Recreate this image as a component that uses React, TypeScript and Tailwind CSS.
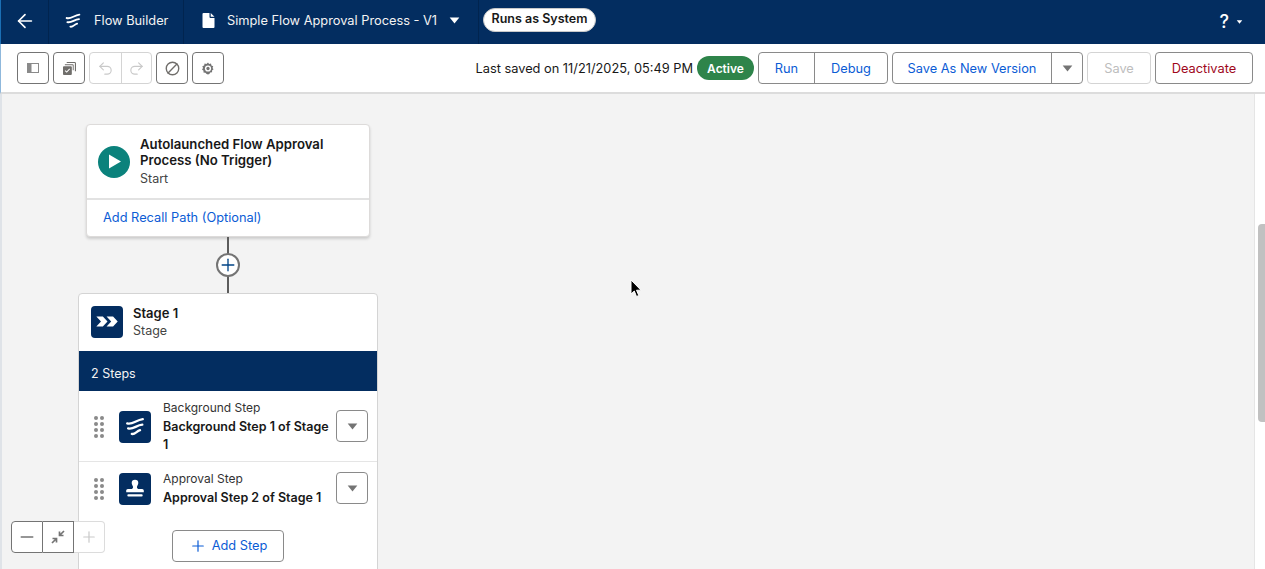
import { Plus, Minus, ArrowLeft, Undo2, Redo2, Ban } from "lucide-react";

const FlowIcon = ({ className }: { className: string }) => (
  <svg viewBox="0 0 24 24" className={className} fill="none" stroke="#fff" strokeLinecap="round" strokeWidth="2.500">
    <path d="M3.500 8C9 10 13 4.500 20.500 3.500" />
    <path d="M4.500 13.500C10 15 13.500 10 20 9.500" />
    <path d="M8.500 19.500C12 20.500 13.500 16.500 17.500 15.500" />
  </svg>
);

const Caret = ({ className }: { className: string }) => (
  <svg viewBox="0 0 12 8" className={className}>
    <path d="M0.500 0.500h11L6 7.500z" fill="currentColor" />
  </svg>
);

const IconBtn = ({ children }: { children: React.ReactNode }) => (
  <button className="w-8 h-8 flex items-center justify-center bg-white border border-[#747474] rounded text-[#706e6b]">
    {children}
  </button>
);

const Dots = () => (
  <div className="grid grid-cols-2 gap-x-[2px] gap-y-[2px] w-[10px] shrink-0">
    {[0, 1, 2, 3, 4, 5, 6, 7].map((i) => (
      <span key={i} className="w-1 h-1 rounded-full bg-[#8a8a8a]" />
    ))}
  </div>
);

const MenuBtn = () => (
  <button className="w-8 h-8 shrink-0 flex items-center justify-center bg-white border border-[#8a8a8a] rounded text-[#747474]">
    <Caret className="w-[11px] h-[7px]" />
  </button>
);

const TopBar = () => (
  <div className="h-11 bg-[#032d60] flex items-center text-white text-[12.800px] border-l border-[#1b6fb5]">
    <div className="w-[48px] h-full flex items-center justify-center border-r border-[#01244f]">
      <ArrowLeft size={22} strokeWidth={1.800} className="-mt-[3px]" />
    </div>
    <div className="w-[135px] h-full flex items-center border-r border-[#01244f] pl-[15px] gap-[12px] pb-[3px]">
      <FlowIcon className="w-[18px] h-[18px]" />
      <span className="text-[#f3f3f3]">Flow Builder</span>
    </div>
    <div className="w-[295px] h-full flex items-center border-r border-[#01244f] pl-[18px] pb-[3px]">
      <svg viewBox="0 0 12 15" className="w-[13px] h-[15px]">
        <path d="M1 0h6v4a1 1 0 0 0 1 1h4v9a1 1 0 0 1-1 1H1a1 1 0 0 1-1-1V1a1 1 0 0 1 1-1z M8.200 0 12 3.800H8.200z" fill="#fff" />
      </svg>
      <span className="ml-[12px] text-[#f3f3f3] whitespace-nowrap">Simple Flow Approval Process - V1</span>
      <Caret className="w-[11px] h-[7px] ml-[12px] text-white" />
    </div>
    <div className="ml-[4px] -mt-[5px] h-6 w-[113px] flex items-center justify-center bg-white border border-[#c9c9c9] rounded-full text-[#181818] text-[12.500px] font-semibold whitespace-nowrap">
      Runs as System
    </div>
    <div className="ml-auto mr-[22px] flex items-center gap-[7px]">
      <span className="text-[18px] font-medium leading-none">?</span>
      <Caret className="w-[7px] h-[4px] text-white" />
    </div>
  </div>
);

const ToolBar = () => (
  <div className="h-[50px] bg-white border-b-2 border-l border-b-[#dcdcdc] border-l-[#8fb8dc] flex items-center pl-[16px] pr-[12px] text-[12.800px]">
    <div className="flex items-center gap-[4px]">
      <IconBtn>
        <svg viewBox="0 0 12 10" className="w-3 h-[10px]">
          <path d="M0 0h12v10H0z M4.500 1v8H11V1z" fill="#8a8a8a" fillRule="evenodd" />
        </svg>
      </IconBtn>
      <IconBtn>
        <svg viewBox="0 0 14 14" className="w-[13px] h-[13px]">
          <path d="M4 0h8.500A1.500 1.500 0 0 1 14 1.500V10h-1.200V1.200H4z M2 2.500h8.500a1 1 0 0 1 1 1V9h-1V3.500H2z" fill="#706e6b" />
          <rect x="0" y="4.500" width="9.500" height="9.500" rx="1" fill="#706e6b" />
          <path d="M2.300 9.200l1.700 1.700 3.200-3.400" fill="none" stroke="#fff" strokeWidth="1.100" />
        </svg>
      </IconBtn>
      <div className="flex h-8 border border-[#d4d4d4] rounded text-[#c9c9c9]">
        <div className="w-8 flex items-center justify-center border-r border-[#d4d4d4]">
          <Undo2 size={17} strokeWidth={1.600} />
        </div>
        <div className="w-[29px] flex items-center justify-center">
          <Redo2 size={17} strokeWidth={1.600} />
        </div>
      </div>
      <IconBtn>
        <Ban size={15} strokeWidth={2.200} className="-scale-x-100" />
      </IconBtn>
      <IconBtn>
        <svg viewBox="0 0 14 14" className="w-3 h-[13px]">
          <path
            d="M7 0l1.300 1.700 2.200-.4.500 2.200 2.100.8-.8 2 1.200 1.700-1.800 1.300.1 2.200-2.200.1L8.600 13.500 7 14l-1.600-.5-1.500-1.600-2.200-.1.100-2.200L0 8.300 1.200 6.300l-.8-2 2.100-.8.500-2.200 2.200.4z"
            fill="#747474"
          />
          <circle cx="7" cy="7" r="3.600" fill="#fff" />
          <circle cx="7" cy="7" r="1.900" fill="#747474" />
        </svg>
      </IconBtn>
    </div>
    <div className="ml-auto flex items-center">
      <span className="text-[#181818] whitespace-nowrap pt-[2px]">Last saved on 11/21/2025, 05:49 PM</span>
      <span className="ml-[4px] h-6 w-[57px] flex items-center justify-center bg-[#2e844a] rounded-full text-white font-semibold text-[12px] pt-[2px]">
        Active
      </span>
      <div className="ml-[4px] flex h-8 bg-white border border-[#8a8a8a] rounded text-[#0b5cd5]">
        <button className="w-[56px] border-r border-[#8a8a8a] pt-[2px]">Run</button>
        <button className="w-[72px] pt-[2px]">Debug</button>
      </div>
      <div className="ml-[4px] flex h-8 bg-white border border-[#8a8a8a] rounded text-[#0b5cd5]">
        <button className="w-[159px] border-r border-[#8a8a8a] whitespace-nowrap pt-[2px]">Save As New Version</button>
        <button className="w-[30px] flex items-center justify-center text-[#747474]">
          <Caret className="w-[11px] h-[7px]" />
        </button>
      </div>
      <button className="ml-[4px] w-[64px] h-8 bg-white border border-[#d4d4d4] rounded text-[#bdbdbd] pt-[2px]">Save</button>
      <button className="ml-[4px] w-[98px] h-8 bg-white border border-[#8a8a8a] rounded text-[#a0071b] pt-[2px]">Deactivate</button>
    </div>
  </div>
);

const StartCard = () => (
  <div className="ml-[8px] w-[284px] bg-white border border-[#dddbda] rounded shadow-[0_2px_3px_rgba(0,0,0,0.16)]">
    <div className="h-[75px] flex items-center pl-[11px] border-b-2 border-[#e2e2e2]">
      <div className="w-8 h-8 rounded-full bg-[#0b827c] flex items-center justify-center shrink-0">
        <svg viewBox="0 0 12 14" className="w-[12px] h-[15px] ml-[2px]">
          <path d="M0 0l12 7-12 7z" fill="#fff" />
        </svg>
      </div>
      <div className="ml-[10px] pt-[2px] text-[13.200px] leading-4 text-[#181818]">
        <div className="font-semibold w-[215px]">Autolaunched Flow Approval Process (No Trigger)</div>
        <div className="text-[#444] text-[12.500px] leading-[22px] font-normal">Start</div>
      </div>
    </div>
    <div className="h-[36px] flex items-center pl-[16px] text-[12.800px] text-[#0b5cd5]">Add Recall Path (Optional)</div>
  </div>
);

const Connector = () => (
  <div className="ml-[149px] w-[2px] h-[56px] bg-[#5c5c5c] relative">
    <div className="absolute left-[-11px] top-[16px] w-6 h-6 rounded-full bg-white border-2 border-[#747474] flex items-center justify-center">
      <Plus size={20} strokeWidth={1.600} className="text-[#014486] shrink-0" />
    </div>
  </div>
);

type StepProps = {
  kind: string;
  title: string;
  icon: React.ReactNode;
  h: string;
  dotsTop: string;
  iconTop: string;
  menuTop: string;
};

const Step = ({ kind, title, icon, h, dotsTop, iconTop, menuTop }: StepProps) => (
  <div className={`${h} flex items-start pl-[15px] pr-[9px] text-[#181818]`}>
    <div className={dotsTop}><Dots /></div>
    <div className={`${iconTop} ml-[15px] w-8 h-8 shrink-0 rounded bg-[#032d60] flex items-center justify-center`}>{icon}</div>
    <div className="ml-[12px] w-[170px] mt-[7px] text-[12.500px] leading-[18px]">
      <div className="text-[#333] text-[12px] leading-[20px]">{kind}</div>
      <div className="font-semibold">{title}</div>
    </div>
    <div className={`${menuTop} ml-auto`}><MenuBtn /></div>
  </div>
);

const StageCard = () => (
  <div className="w-[300px] bg-white border border-[#d4d4d4] rounded-t shrink-0">
    <div className="h-[57px] flex items-center pl-[12px] pb-[2px]">
      <div className="w-8 h-8 rounded bg-[#032d60] flex items-center justify-center">
        <svg viewBox="0 0 24 14" className="w-[23px] h-[13px]">
          <path d="M0 1.500h7l5 5.500-5 5.500H0l5-5.500z M11 1.500h7l5 5.500-5 5.500h-7l5-5.500z" fill="#fff" />
        </svg>
      </div>
      <div className="ml-[10px] text-[13px] leading-[18px]">
        <div className="font-semibold text-[#181818]">Stage 1</div>
        <div className="text-[#444] text-[12.500px]">Stage</div>
      </div>
    </div>
    <div className="h-[40px] bg-[#032d60] text-[#f3f3f3] text-[12.500px] flex items-center pl-[12px] pt-[6px]">2 Steps</div>
    <Step
      kind="Background Step"
      title="Background Step 1 of Stage 1"
      h="h-[71px] border-b border-[#e5e5e5]"
      dotsTop="mt-[25px]"
      iconTop="mt-[20px]"
      menuTop="mt-[19px]"
      icon={<FlowIcon className="w-[22px] h-[22px]" />}
    />
    <Step
      kind="Approval Step"
      title="Approval Step 2 of Stage 1"
      h="h-[59px]"
      dotsTop="mt-[16px]"
      iconTop="mt-[11px]"
      menuTop="mt-[10px]"
      icon={
        <svg viewBox="0 0 20 20" className="w-[22px] h-[22px]">
          <path d="M7 4.500a3 3 0 0 1 6 0c0 1.500-1 2.200-1.200 3.500-.1.800.2 1.500 1 2h3.700c.8 0 1.500.7 1.500 1.500V13H2v-1.500C2 10.700 2.700 10 3.500 10h3.700c.8-.5 1.100-1.200 1-2C8 6.700 7 6 7 4.500z" fill="#fff" />
          <rect x="3" y="14.800" width="14" height="2" rx="1" fill="#fff" />
        </svg>
      }
    />
    <div className="flex justify-center mt-[9px] pb-[20px]">
      <button className="w-[112px] h-8 bg-white border border-[#8a8a8a] rounded flex items-center justify-center gap-[5px] text-[12.800px] text-[#0b5cd5]">
        <Plus size={18} strokeWidth={1.600} />
        Add Step
      </button>
    </div>
  </div>
);

const ZoomControls = () => (
  <div className="absolute left-[9px] bottom-[16px] flex h-8 bg-white rounded">
    <div className="w-8 flex items-center justify-center border border-[#747474] rounded-l text-[#747474]">
      <Minus size={20} strokeWidth={1.600} />
    </div>
    <div className="w-[31px] flex items-center justify-center border-y border-r border-[#747474]">
      <svg viewBox="0 0 14 14" className="w-[14px] h-[14px]">
        <path d="M13 1L9 5M8.500 1.500v4h4M1 13l4-4M1.500 8.500h4v4" fill="none" stroke="#747474" strokeWidth="1.700" />
      </svg>
    </div>
    <div className="w-[31px] flex items-center justify-center border-y border-r border-[#dcdcdc] rounded-r text-[#c9c9c9]">
      <Plus size={18} strokeWidth={1.600} />
    </div>
  </div>
);

export default function App() {
  return (
    <div className="w-[1265px] h-[569px] overflow-hidden flex flex-col bg-white font-['Inter','Liberation_Sans',sans-serif]">
      <TopBar />
      <ToolBar />
      <div className="relative flex flex-1 min-h-0 border-l-2 border-[#dfe3e8]">
        <div className="flex-1 bg-[#f3f3f3] border-r border-[#e5e5e5] overflow-hidden pt-[30px] pl-[76px]">
          <StartCard />
          <Connector />
          <StageCard />
        </div>
        <div className="w-[10px] pl-[3px] pt-[130px] bg-white">
          <div className="w-[7px] h-[198px] bg-[#c1c1c1] rounded-l" />
        </div>
        <ZoomControls />
        <svg viewBox="0 0 12 19" className="absolute left-[628px] top-[185px] w-3 h-[19px]">
          <path d="M1 1v14l3.300-3 2.200 5.500 2.300-1-2.300-5.300H11z" fill="#000" stroke="#fff" strokeWidth="1" />
        </svg>
      </div>
    </div>
  );
}
